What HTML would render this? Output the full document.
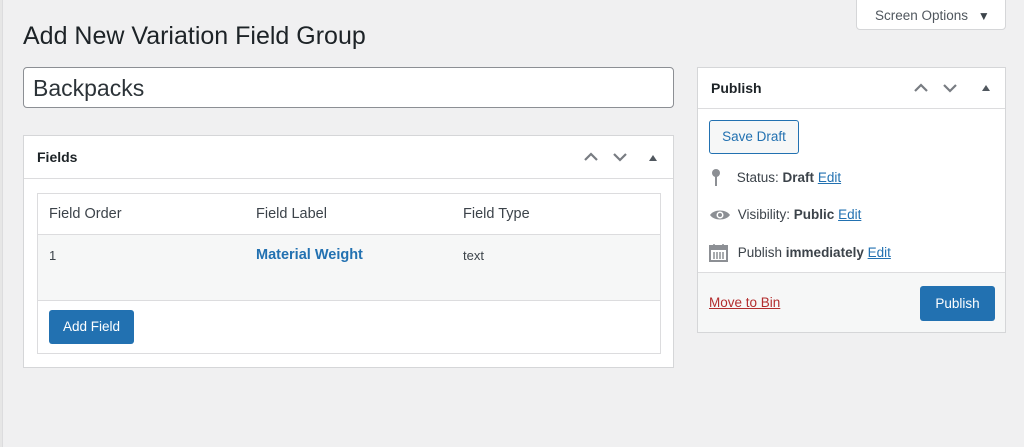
<!DOCTYPE html>
<html><head><style>
*{box-sizing:border-box;margin:0;padding:0}
body{width:1024px;height:447px;background:#f0f0f1;font-family:"Liberation Sans",sans-serif;color:#3c434a;position:relative;overflow:hidden}
.a{position:absolute}
.box{background:#fff;border:1px solid #d5d6d8}
a{color:#2271b1}
.arr{stroke:#787c82;stroke-width:2.2;fill:none}
</style></head><body>
<div class="a" style="left:0;top:0;width:3px;height:447px;background:#e6e6e6;border-right:1px solid #dcdcde"></div>
<div class="a box" style="left:856px;top:-1px;width:150px;height:31px;border-radius:0 0 4px 4px;font-size:13.5px;color:#50575e;line-height:31px;padding-left:18px">Screen Options <span style="font-size:12px;margin-left:6px;color:#3c434a">▼</span></div>
<div class="a" style="left:23px;top:22px;font-size:25px;color:#1d2327">Add New Variation Field Group</div>
<div class="a box" style="left:23px;top:67px;width:651px;height:41px;border-color:#8c8f94;border-radius:4px;font-size:23px;color:#2c3338;padding-left:9px;line-height:40px">Backpacks</div>

<div class="a box" style="left:23px;top:135px;width:651px;height:233px">
 <div style="height:43px;border-bottom:1px solid #dcdcde;font-size:14px;font-weight:bold;color:#1d2327;line-height:42px;padding-left:13px">Fields</div>
 <svg class="a" style="left:558px;top:13px" width="90" height="16"><path class="arr" d="M3 11l6-6 6 6"/><path class="arr" d="M32 5l6 6 6-6"/><path d="M67 12l4-6 4 6z" fill="#50575e"/></svg>
 <div class="a box" style="left:13px;top:57px;width:624px;height:161px;border-color:#dcdcde">
  <div style="height:41px;border-bottom:1px solid #dcdcde;font-size:14.5px;line-height:41px;position:relative">
   <span class="a" style="left:11px">Field Order</span><span class="a" style="left:218px">Field Label</span><span class="a" style="left:425px">Field Type</span></div>
  <div style="height:66px;background:#f6f7f7;border-bottom:1px solid #dcdcde;position:relative;font-size:13px">
   <span class="a" style="left:11px;top:13px">1</span>
   <span class="a" style="left:218px;top:12px;font-size:14.5px;font-weight:bold;color:#2271b1">Material Weight</span>
   <span class="a" style="left:425px;top:13px">text</span></div>
  <div class="a" style="left:11px;top:116px;width:85px;height:34px;background:#2271b1;border-radius:3px;color:#fff;font-size:13.5px;line-height:34px;text-align:center">Add Field</div>
 </div>
</div>

<div class="a box" style="left:697px;top:67px;width:309px;height:266px">
 <div style="height:41px;border-bottom:1px solid #dcdcde;font-size:14px;font-weight:bold;color:#1d2327;line-height:41px;padding-left:13px">Publish</div>
 <svg class="a" style="left:212px;top:12px" width="90" height="16"><path class="arr" d="M5 11l6-6 6 6"/><path class="arr" d="M34 5l6 6 6-6"/><path d="M72 11l4-6 4 6z" fill="#50575e"/></svg>
 <div class="a" style="left:11px;top:52px;width:90px;height:34px;border:1px solid #2271b1;border-radius:3px;background:#f6f7f7;color:#2271b1;font-size:13.5px;line-height:32px;text-align:center">Save Draft</div>
 <div class="a" style="left:11px;top:100px;font-size:13.5px;line-height:20px">
  <svg width="16" height="20" style="vertical-align:middle"><circle cx="7" cy="5" r="4" fill="#8c8f94"/><rect x="6" y="8" width="2" height="10" fill="#8c8f94"/></svg>
  <span style="margin-left:8px">Status: <b>Draft</b> <a href="#">Edit</a></span></div>
 <div class="a" style="left:11px;top:137px;font-size:13.5px;line-height:20px">
  <svg width="22" height="20" style="vertical-align:middle"><path d="M1 10C5 4 17 4 21 10C17 16 5 16 1 10Z" fill="#8c8f94"/><circle cx="11" cy="10" r="3.5" fill="#fff"/><circle cx="11" cy="10" r="2" fill="#8c8f94"/></svg>
  <span style="margin-left:3px">Visibility: <b>Public</b> <a href="#">Edit</a></span></div>
 <div class="a" style="left:11px;top:175px;font-size:13.5px;line-height:20px">
  <svg width="20" height="20" style="vertical-align:middle"><rect x="1" y="3" width="17" height="15" fill="none" stroke="#8c8f94" stroke-width="2"/><rect x="1" y="3" width="17" height="4" fill="#8c8f94"/><path d="M5 1v4M14 1v4M5 9v7M8 9v7M11 9v7M14 9v7" stroke="#8c8f94" stroke-width="1.5"/></svg>
  <span style="margin-left:5px">Publish <b>immediately</b> <a href="#">Edit</a></span></div>
 <div class="a" style="left:0;top:204px;width:307px;height:60px;background:#f6f7f7;border-top:1px solid #dcdcde">
  <a class="a" href="#" style="left:11px;top:22px;color:#b32d2e;font-size:13.5px">Move to Bin</a>
  <div class="a" style="left:222px;top:13px;width:75px;height:35px;background:#2271b1;border-radius:3px;color:#fff;font-size:13.5px;line-height:35px;text-align:center">Publish</div>
 </div>
</div>
</body></html>
